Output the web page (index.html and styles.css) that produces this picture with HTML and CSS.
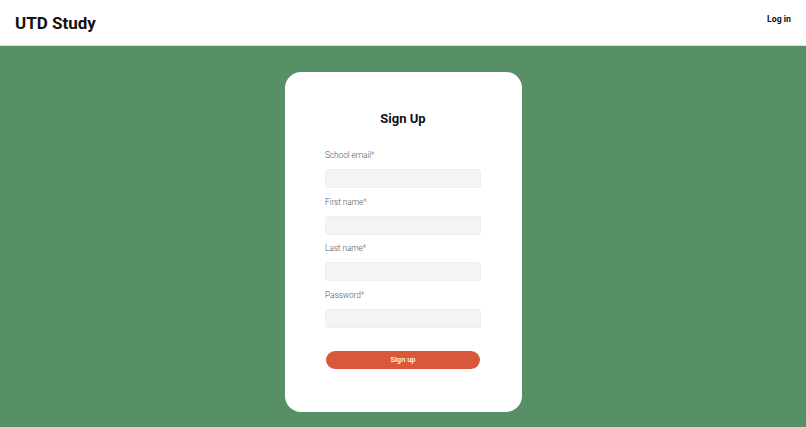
FILE: index.html
```html
<!DOCTYPE html>
<html lang="en">
<head>
  <meta charset="UTF-8" />
  <meta name="viewport" content="width=device-width, initial-scale=1.0" />
  <title>UTD Study - Sign Up</title>
  <link rel="stylesheet" href="styles.css">
</head>
<body>

  <header class="navbar">
    <a class="brand" href="#">UTD Study</a>
    <a class="login-link" href="#">Log in</a>
  </header>

  <main class="page">
    <div class="card">
      <h2>Sign Up</h2>
      <form class="signup-form">
        <label>School email<span class="req">*</span></label>
        <input type="email" name="email">

        <label>First name<span class="req">*</span></label>
        <input type="text" name="first_name">

        <label>Last name<span class="req">*</span></label>
        <input type="text" name="last_name">

        <label>Password<span class="req">*</span></label>
        <input type="password" name="password">

        <button type="submit">Sign up</button>
      </form>
    </div>
  </main>

</body>
</html>
```

FILE: styles.css
```css
* {
  box-sizing: border-box;
}

body {
  margin: 0;
  font-family: Roboto, "Liberation Sans", sans-serif;
  color: #111;
  background: #578f66;
}

.navbar {
  height: 46px;
  background: #fff;
  display: flex;
  justify-content: space-between;
  align-items: flex-start;
  padding: 0 15px 0 15px;
  border-bottom: 1px solid #d8e6dc;
}

.brand {
  margin-top: 13px;
  font-size: 17px;
  font-weight: 700;
  color: #111;
  text-decoration: none;
}

.login-link {
  margin-top: 14px;
  font-size: 8.7px;
  font-weight: 700;
  color: #111;
  text-decoration: none;
}

.page {
  height: 381px;
  display: flex;
  justify-content: center;
  padding-top: 26px;
}

.card {
  width: 237px;
  height: 340px;
  background: #fff;
  border-radius: 16px;
  padding-top: 39px;
}

h2 {
  margin: 0 0 23px;
  text-align: center;
  font-size: 13px;
  line-height: 16px;
  font-weight: 700;
}

.signup-form {
  width: 156px;
  margin: 0 auto;
  display: flex;
  flex-direction: column;
}

label {
  font-size: 8.4px;
  line-height: 11px;
  letter-spacing: -0.1px;
  font-weight: 300;
  color: #555;
  margin-bottom: 8px;
}

.req {
  color: #d9304a;
}

input {
  height: 19px;
  margin: 0 0 8.5px;
  border: 1px solid #eee;
  border-radius: 3px;
  background: #f4f4f4;
  font-size: 9px;
}

button[type="submit"] {
  width: 154px;
  height: 18px;
  margin: 14.5px auto 0;
  border: none;
  border-radius: 9px;
  background: #d9583b;
  color: #fff;
  font-family: Roboto, "Liberation Sans", sans-serif;
  font-size: 7.5px;
  font-weight: 500;
  cursor: pointer;
}
```
